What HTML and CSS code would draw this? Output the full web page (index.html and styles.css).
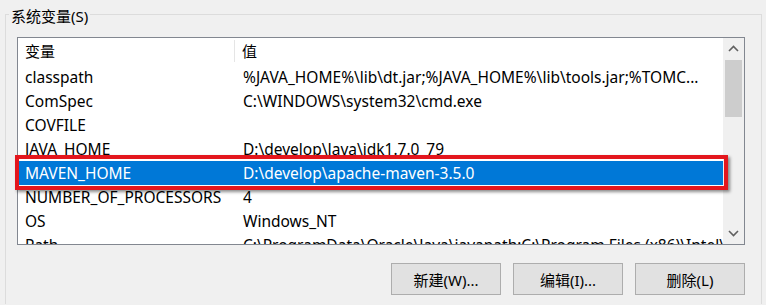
FILE: index.html
```html
<!DOCTYPE html>
<html lang="zh-CN">
<head>
<meta charset="utf-8" />
<title>系统变量</title>
<link rel="stylesheet" href="styles.css">
</head>
<body>
<div class="group">
    <span class="legend">系统变量(S)</span>

    <div class="list">
        <div class="rows">
            <div class="row head">
                <span class="name">变量</span>
                <span class="value">值</span>
            </div>
            <div class="row"><span class="name">classpath</span><span class="value">%JAVA_HOME%\lib\dt.jar;%JAVA_HOME%\lib\tools.jar;%TOMC...</span></div>
            <div class="row"><span class="name">ComSpec</span><span class="value">C:\WINDOWS\system32\cmd.exe</span></div>
            <div class="row"><span class="name">COVFILE</span><span class="value"></span></div>
            <div class="row"><span class="name">JAVA_HOME</span><span class="value">D:\develop\Java\jdk1.7.0_79</span></div>
            <div class="row selected"><span class="name">MAVEN_HOME</span><span class="value">D:\develop\apache-maven-3.5.0</span></div>
            <div class="row"><span class="name">NUMBER_OF_PROCESSORS</span><span class="value">4</span></div>
            <div class="row"><span class="name">OS</span><span class="value">Windows_NT</span></div>
            <div class="row"><span class="name">Path</span><span class="value">C:\ProgramData\Oracle\Java\javapath;C:\Program Files (x86)\Intel\iCLS</span></div>
        </div>
        <div class="scrollbar">
            <div class="arrow">
                <svg width="11" height="7" viewBox="0 0 11 7"><path d="M1 6 L5.5 1.5 L10 6" fill="none" stroke="#606060" stroke-width="1.6"/></svg>
            </div>
            <div class="thumb"></div>
            <div class="track"></div>
            <div class="arrow">
                <svg width="11" height="7" viewBox="0 0 11 7"><path d="M1 1 L5.5 5.5 L10 1" fill="none" stroke="#606060" stroke-width="1.6"/></svg>
            </div>
        </div>
    </div>

    <!-- red highlight drawn over the selected row -->
    <div class="mark"></div>

    <div class="buttons">
        <button class="btn">新建(W)...</button>
        <button class="btn">编辑(I)...</button>
        <button class="btn">删除(L)</button>
    </div>
</div>
</body>
</html>
```

FILE: styles.css
```css
html, body {
    margin: 0;
    background: #f0f0f0;
    font-family: "Noto Sans", "Noto Sans CJK SC", sans-serif;
    font-size: 15px;
    color: #000;
}

/* group box */
.group {
    position: relative;
    margin: 14px 4px 0 5px;
    height: 290px;
    border: 1px solid #dcdcdc;
    border-bottom: none;
    padding: 22px 16px 0 11px;
    box-sizing: border-box;
}
.legend {
    position: absolute;
    top: -9px;
    left: 3px;
    padding: 0 2px;
    background: #f0f0f0;
    line-height: 20px;
    white-space: nowrap;
}

/* list view */
.list {
    display: flex;
    width: 728px;
    height: 208px;
    box-sizing: border-box;
    border: 1px solid #828790;
    background: #fff;
}
.rows {
    flex: 1;
    overflow: hidden;
    font-size: 15.5px;
}
.row {
    display: flex;
    height: 24px;
    line-height: 24px;
    white-space: nowrap;
}
.row .name {
    width: 218px;
    flex: none;
    box-sizing: border-box;
    padding-left: 7px;
}
.row .value {
    flex: 1;
    padding-left: 7px;
    overflow: hidden;
}
.row.head {
    height: 27px;
    font-size: 15px;
}
.row.head .name {
    width: 217px;
    border-right: 1px solid #e5e5e5;
    height: 22px;
    margin-top: 2px;
    line-height: 22px;
}
.row.head .value {
    line-height: 26px;
}
.row.selected {
    background: #0078d7;
    color: #fff;
}

/* scrollbar */
.scrollbar {
    width: 21px;
    flex: none;
    display: flex;
    flex-direction: column;
    background: #f0f0f0;
}
.arrow {
    height: 21px;
    display: flex;
    align-items: center;
    justify-content: center;
}
.thumb {
    height: 57px;
    margin: 1px 2px 0 2px;
    background: #cdcdcd;
}
.track {
    flex: 1;
}

/* annotation */
.mark {
    position: absolute;
    left: 9px;
    top: 140px;
    width: 713px;
    height: 35px;
    box-sizing: border-box;
    border: 4px solid #e3161d;
    box-shadow: 2px 2px 3px rgba(0, 0, 0, 0.45);
}

/* buttons */
.buttons {
    display: flex;
    justify-content: flex-end;
    gap: 12px;
    width: 728px;
    margin-top: 18px;
}
.btn {
    width: 110px;
    height: 32px;
    border: 1px solid #adadad;
    background: #e1e1e1;
    font-family: "Noto Sans", "Noto Sans CJK SC", sans-serif;
    font-size: 15px;
    color: #000;
    padding: 0;
}
```
